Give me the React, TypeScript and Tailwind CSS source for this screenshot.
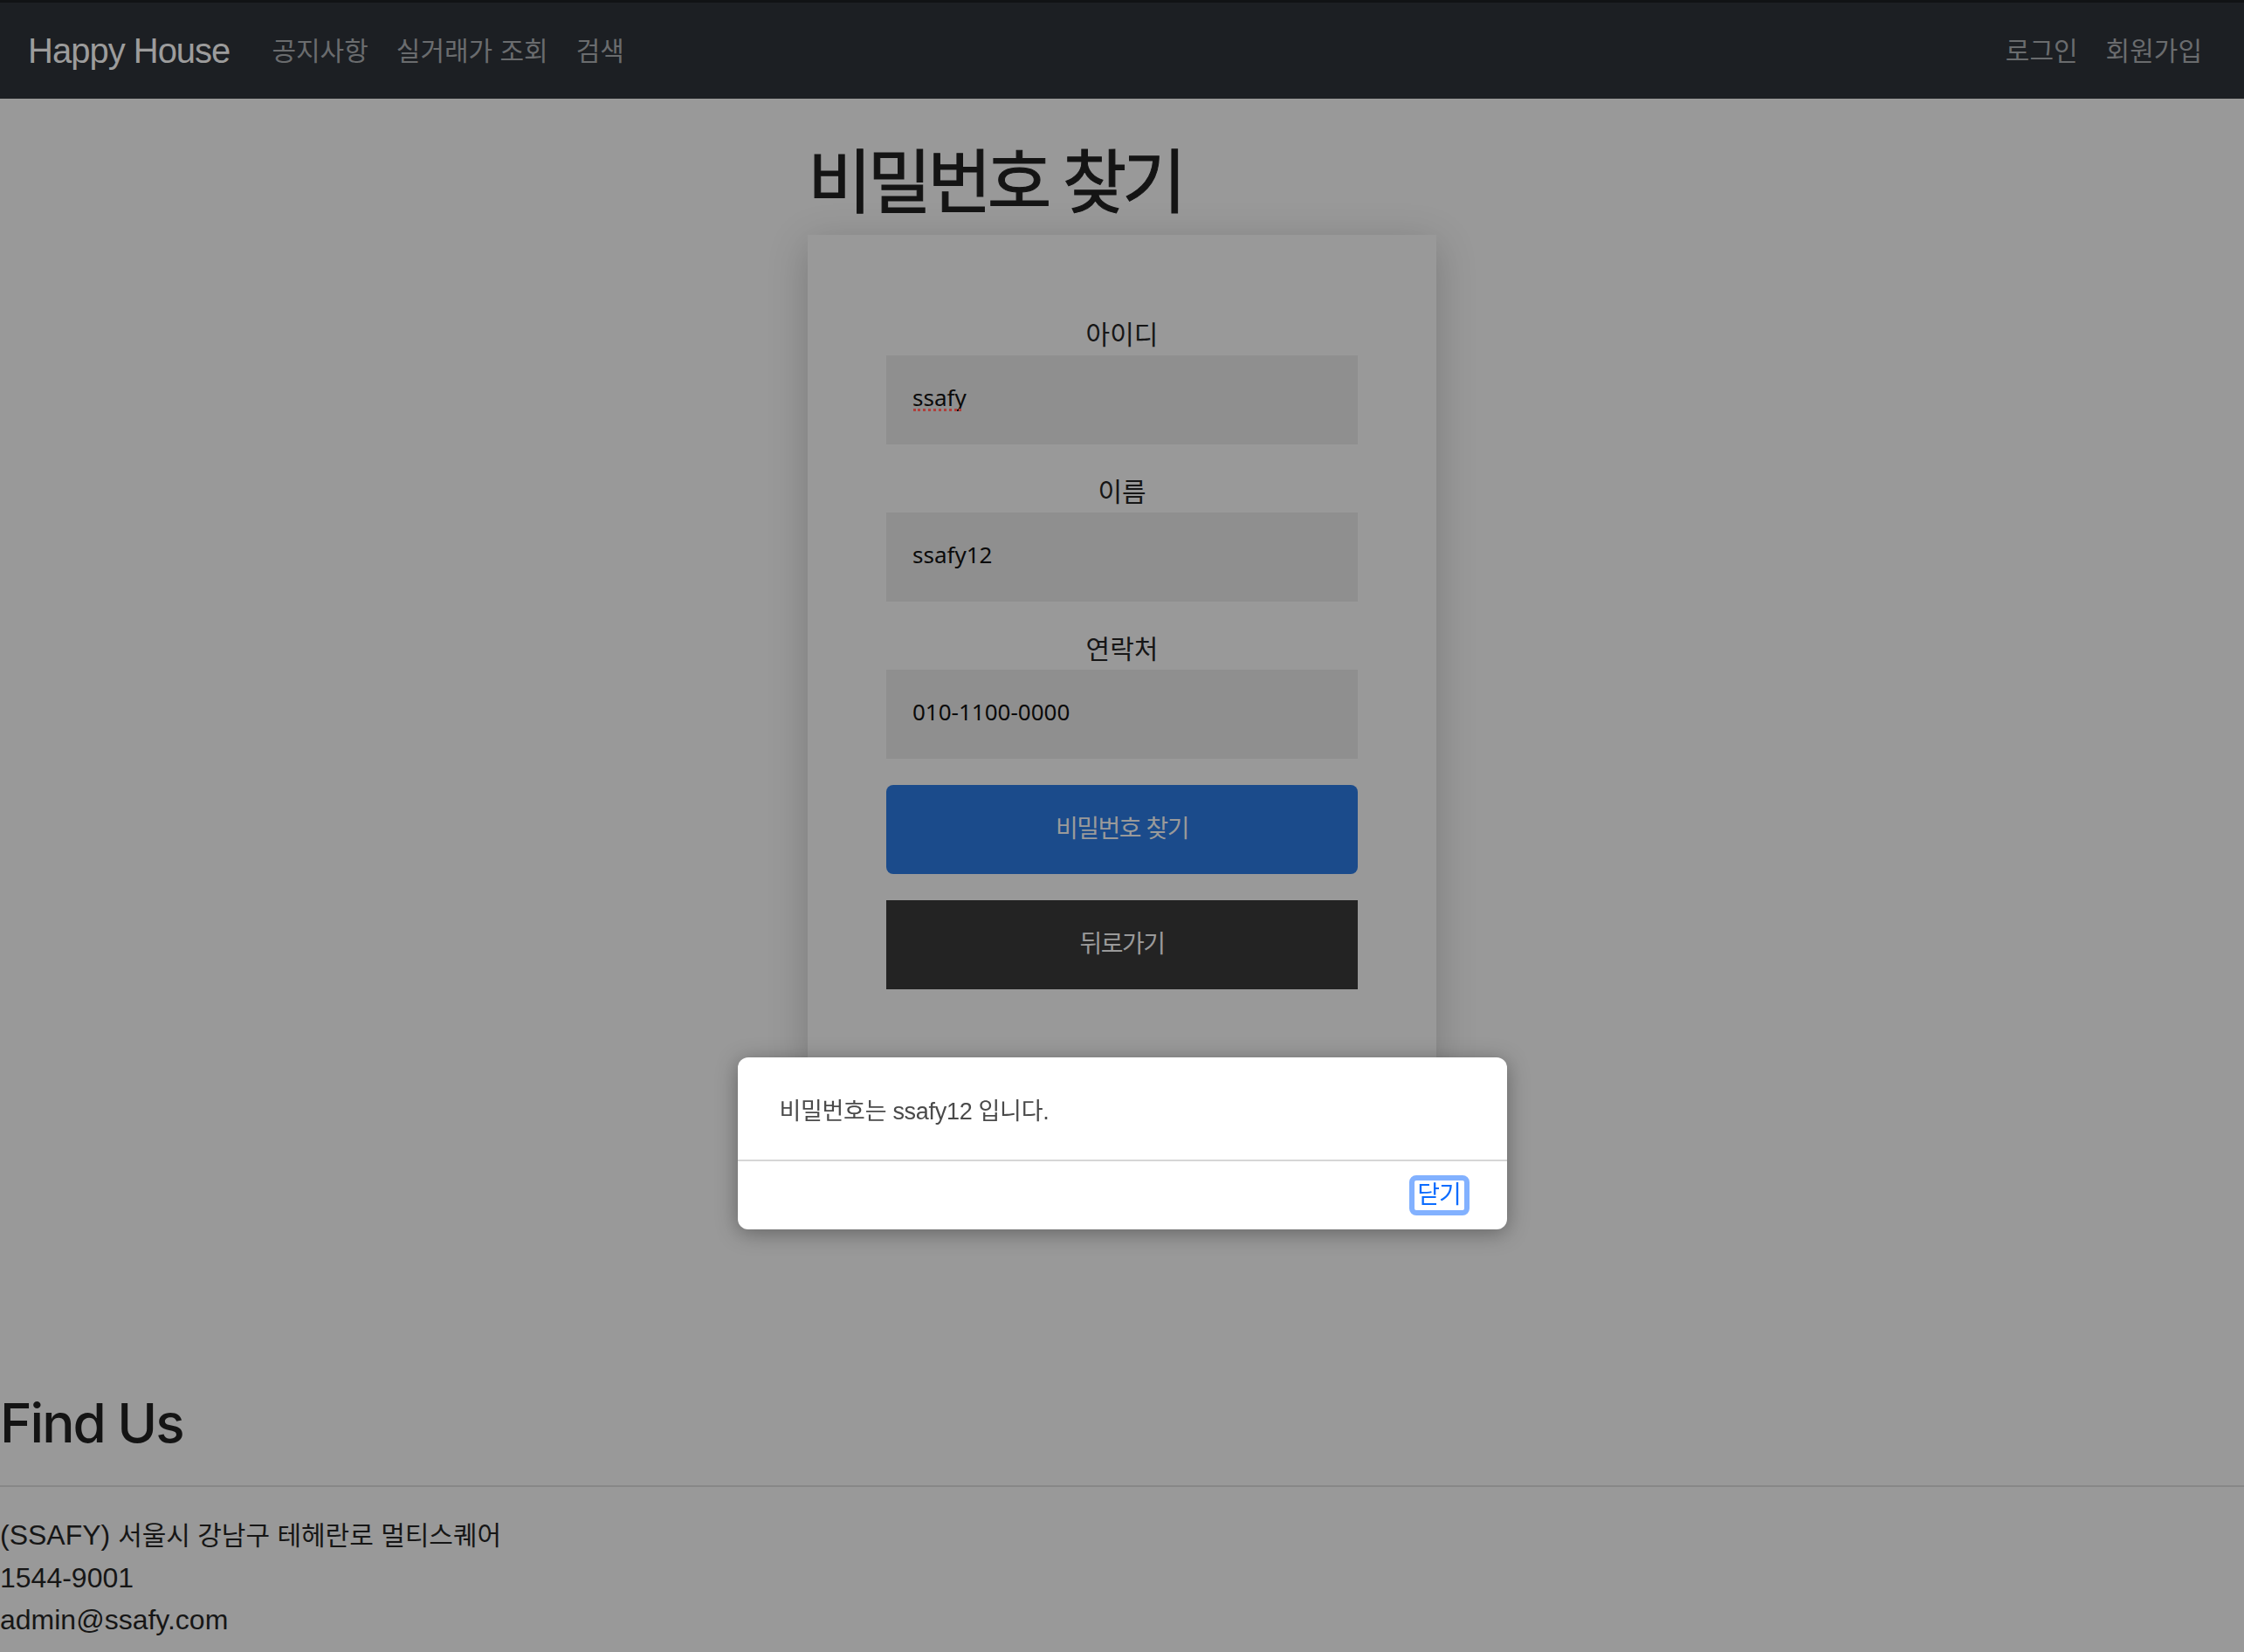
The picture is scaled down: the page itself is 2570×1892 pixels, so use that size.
import React from "react";

const KO = "font-['Liberation_Sans','Noto_Sans_CJK_KR',sans-serif]";

const NAV_LEFT = ["공지사항", "실거래가 조회", "검색"];
const NAV_RIGHT = ["로그인", "회원가입"];

const FIELDS = [
  { label: "아이디", value: "ssafy", spell: true },
  { label: "이름", value: "ssafy12", spell: false },
  { label: "연락처", value: "010-1100-0000", spell: false },
];

const Field = ({ label, value, spell, first }: { label: string; value: string; spell: boolean; first: boolean }) => (
  <div className={first ? "" : "mt-[35px]"}>
    <label className="mb-[3px] block text-center text-[30px] leading-[40px] text-[#161616]">
      {label}
    </label>
    <div className="relative">
      <input
        readOnly
        value={value}
        spellCheck={false}
        className="block h-[102px] w-full bg-[#8f8f8f] px-[30px] pb-[6px] font-['Noto_Sans',sans-serif] text-[26px] text-[#0a0a0a] outline-none"
      />
      {spell && (
        <span className="absolute left-[31px] top-[61px] w-[55px] border-b-[3px] border-dotted border-[#b0403c]" />
      )}
    </div>
  </div>
);

export default function App() {
  return (
    <div className={`min-h-[1892px] bg-[#999999] ${KO}`}>
      <nav className="flex h-[113px] items-center justify-between border-t-[3px] border-[#111315] bg-[#1c1f23] px-[32px]">
        <div className="flex items-center">
          <a className="mr-[32px] text-[40px] tracking-[-1px] text-[#9c9c9c]">Happy House</a>
          <ul className="flex">
            {NAV_LEFT.map((item) => (
              <li key={item} className="px-[16px] text-[30px] text-[#6a6c6e]">
                {item}
              </li>
            ))}
          </ul>
        </div>
        <ul className="flex">
          {NAV_RIGHT.map((item) => (
            <li key={item} className="px-[16px] text-[30px] text-[#6a6c6e]">
              {item}
            </li>
          ))}
        </ul>
      </nav>

      <main className="mx-auto w-[720px]">
        <h1 className="mt-[49px] text-[80px] font-normal leading-[96px] tracking-[-5px] text-[#141414] [-webkit-text-stroke:1px_#141414]">
          비밀번호 찾기
        </h1>
        <div className="mt-[11px] bg-[#999999] px-[90px] pb-[90px] pt-[95px] shadow-[0_10px_44px_rgba(0,0,0,0.2)]">
          {FIELDS.map((f, i) => (
            <Field key={f.label} label={f.label} value={f.value} spell={f.spell} first={i === 0} />
          ))}
          <button className="mt-[30px] flex h-[102px] w-full items-center justify-center rounded-[8px] bg-[#1b4b8b] text-[28px] tracking-[-1.5px] text-[#9a9a9a]">
            비밀번호 찾기
          </button>
          <button className="mt-[30px] flex h-[102px] w-full items-center justify-center bg-[#232323] text-[28px] tracking-[-1.5px] text-[#9a9a9a]">
            뒤로가기
          </button>
        </div>
      </main>

      <footer className="mt-[368px]">
        <h2 className="font-['Inter',sans-serif] text-[62px] font-medium leading-[77px] tracking-[-2px] text-[#141414]">
          Find Us
        </h2>
        <hr className="mt-[33px] border-t-2 border-[#878787]" />
        <div className="mt-[31px] text-[32px] leading-[48px] text-[#161616]">
          <p>
            (SSAFY) <span className="text-[30px]">서울시 강남구 테헤란로 멀티스퀘어</span>
          </p>
          <p>1544-9001</p>
          <p>admin@ssafy.com</p>
        </div>
      </footer>

      <div className="fixed inset-x-0 top-[1211px] flex justify-center">
        <div className="w-[881px] rounded-[12px] bg-white shadow-[0_4px_24px_rgba(0,0,0,0.35)]">
          <div className="flex h-[117px] items-center px-[48px] pt-[8px]">
            <p className="text-[27px] tracking-[-0.3px] text-[#4a4a4a]">비밀번호는 ssafy12 입니다.</p>
          </div>
          <div className="flex h-[80px] items-center justify-end border-t-2 border-[#d6d6d6] pr-[43px]">
            <button className="flex h-[46px] w-[69px] items-center justify-center rounded-[8px] border-[6px] border-[#82b1ff] bg-white text-[28px] leading-none tracking-[-1px] text-[#0b6cff]">
              닫기
            </button>
          </div>
        </div>
      </div>
    </div>
  );
}
